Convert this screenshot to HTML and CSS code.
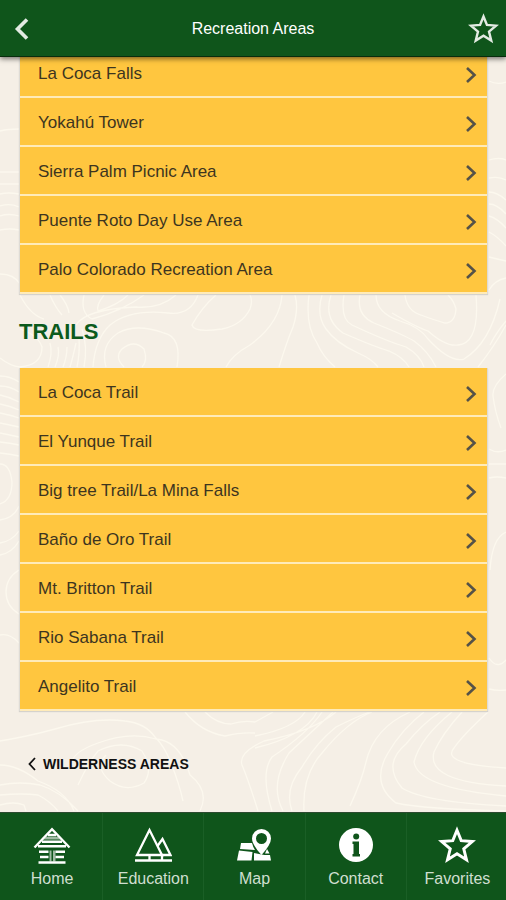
FILE: index.html
```
<!DOCTYPE html>
<html lang="en">
<head>
<meta charset="utf-8">
<meta name="viewport" content="width=device-width, initial-scale=1">
<title>Recreation Areas</title>
<link rel="stylesheet" href="styles.css">
</head>
<body>
<svg class="sprite" aria-hidden="true">
  <symbol id="chevron" viewBox="0 0 12 18"><path d="M2 2l7.500 7-7.500 7" fill="none" stroke="currentColor" stroke-width="2.600"/></symbol>
  <symbol id="star" viewBox="0 0 36 36"><path d="M18 4l4 9.900 10.500.8-8.100 6.900 2.600 10.400-9-5.700-9 5.700 2.600-10.400-8.100-6.900 10.500-.8z" fill="none" stroke="currentColor" stroke-width="2.800"/></symbol>
</svg>

<header class="topbar">
  <button class="icon-button" aria-label="Back">
    <svg class="back-icon" viewBox="0 0 16 24"><path d="M13 2.500L3.500 12l9.500 9.500" fill="none" stroke="currentColor" stroke-width="3.600"/></svg>
  </button>
  <h1 class="title">Recreation Areas</h1>
  <button class="icon-button icon-button-end" aria-label="Add to favorites">
    <svg class="fav-icon"><use href="#star"/></svg>
  </button>
</header>

<main class="content">
  <svg class="contours" viewBox="0 57 506 755" preserveAspectRatio="xMidYMid slice" aria-hidden="true">
    <path d="M0 131Q8 129 19 129M0 172h19M0 184h19M0 194q8-2 19 0M0 206q10-3 19 1M0 216q9-3 19 0M0 230q10-2 19 0M0 274q14 0 20 10"/>
    <path d="M20 295q10 20 24 24M50 295q5 12 12 20M60 295q8 10 9 18M0 358q10 8 20 9 22-2 22-20-4-12-22-18"/>
    <path d="M0 376q10 0 19 6M0 386q10 0 19 6M0 395q10 2 19 7M0 404q10 2 19 6M0 413q10 2 19 5M0 423q10 2 19 4M0 433q10 2 19 4M0 442q10 1 19 3M0 453q10 1 19 3M0 464q10 0 12 18 0 18-12 22M0 520q14-2 19-14M0 543q12-2 19-12M0 555q12-2 19-14M19 570Q6 578 6 592t13 22M0 635q10-2 19 8"/>
    <path d="M48 367q5-14 2-24M55 367q5-12 3-20M63 367q4-10 4-20M70 367q3-10 6-24M77 367q3-14 2-30M84 367q4-20-2-38M93 367q2-28 17-42 20-16 58-12 22 3 30-18M106 367q-6-22 12-34 18-10 46 0 18 4 13 34M124 367q-10-10-2-18 12-10 22 0 4 12-2 18M84 295q-4 18 8 24 30-8 52-24M104 295q-8 10-6 16 20-6 30-16M76 325q10-16 60-18 24 2 40-12"/>
    <path d="M216 295q-14 12-24 30 2 8 30 4 20-4 28-20 3-8 0-14M226 367q6-12 24-22 30-22 32-50M279 367q8-26 14-40 6-18 2-32M309 295q-4 30 8 48 6 14 18 24M322 295q-6 20 4 34 10 14 32 24 14 6 20 14M331 295q-8 24 12 38 32 14 46 18 14 6 20 16M344 295q-4 24 8 30 34 16 54 22 14 8 18 20M360 295q-4 20 14 28 30 12 40 18 14 10 22 26M376 295q0 18 24 26 20 6 28 18 22 24 36 20 26-16 36-60M392 313q24 14 36 18 18 16 30 14 22-2 18-50M405 295q2 16 16 20 10 4 24 8 10 0 11-14-2-8-8-14M478 367q16-20 28-42M490 345q6-12 16-24"/>
    <path d="M489 81q8 4 17 1M489 160q10-3 17 0M489 178q10-2 17 2M489 192q8 0 17 8M489 204q8 0 17 10M489 216q8 2 17 12M489 232q8 4 17 14M489 257q8 2 17 4M489 290q6-10 17-12M506 374q-14 12-13 22 2 16 8 32M489 449q8 5 17 1M489 464h17M489 478q8-2 17 0M490 570q2-32 16-38M489 658q8 12 17 2M489 689q8 2 17 1"/>
    <path d="M0 741q30-5 55-12 40-12 70-8 20 2 30 16 10 10 16 26 8 20 12 38M200 811q10-20-10-36-10-34-34-36-26-8-58 4-28 10-26 22M78 785q10-22 20-34 24-12 44 0 12 18 2 32-18 10-34-2-16-14-4-26M0 785q20-4 40 0 20 6 38 26M0 795q22-2 38 0 12 6 20 16M0 805q14-4 24 0l2 6M0 765q18 0 38 16 28 10 36 30"/>
    <path d="M185 712q16 20 40 24 16-4 30-3M205 712q12 12 26 12 12-4 24-2M255 722l18-10M255 736q40-8 50-24M255 748q50-12 62-36M258 811q-10-32-16-46-4-12 22-24 50-10 72-29M272 811q-12-38 0-54 36-24 50-45M283 811q-14-26 6-58l44-41M292 811q-8-22 10-44 14-24 34-40 20-10 36-16M304 811q-2-36 18-58 26-32 50-41M350 806q12-26 16-44 8-34 44-50M506 811q-82-2-110-8-26-20-8-50 14-24 36-41M506 806q-82-4-104-18-20-24 4-44 16-20 34-32M506 796q-88-8-92-34 6-24 38-50M506 786q-80-4-72-34 8-18 28-40M506 768q-66-4-52-20 8-12 34-36"/>
  </svg>

  <ul class="list list-areas">
    <li><a class="row" href="#la-coca-falls">La Coca Falls<svg class="chevron"><use href="#chevron"/></svg></a></li>
    <li><a class="row" href="#yokahu-tower">Yokahú Tower<svg class="chevron"><use href="#chevron"/></svg></a></li>
    <li><a class="row" href="#sierra-palm">Sierra Palm Picnic Area<svg class="chevron"><use href="#chevron"/></svg></a></li>
    <li><a class="row" href="#puente-roto">Puente Roto Day Use Area<svg class="chevron"><use href="#chevron"/></svg></a></li>
    <li><a class="row" href="#palo-colorado">Palo Colorado Recreation Area<svg class="chevron"><use href="#chevron"/></svg></a></li>
  </ul>

  <h2 class="heading">TRAILS</h2>

  <ul class="list">
    <li><a class="row" href="#la-coca-trail">La Coca Trail<svg class="chevron"><use href="#chevron"/></svg></a></li>
    <li><a class="row" href="#el-yunque">El Yunque Trail<svg class="chevron"><use href="#chevron"/></svg></a></li>
    <li><a class="row" href="#big-tree">Big tree Trail/La Mina Falls<svg class="chevron"><use href="#chevron"/></svg></a></li>
    <li><a class="row" href="#bano-de-oro">Baño de Oro Trail<svg class="chevron"><use href="#chevron"/></svg></a></li>
    <li><a class="row" href="#mt-britton">Mt. Britton Trail<svg class="chevron"><use href="#chevron"/></svg></a></li>
    <li><a class="row" href="#rio-sabana">Rio Sabana Trail<svg class="chevron"><use href="#chevron"/></svg></a></li>
    <li><a class="row" href="#angelito">Angelito Trail<svg class="chevron"><use href="#chevron"/></svg></a></li>
  </ul>

  <a class="previous" href="#wilderness">
    <svg class="previous-icon" viewBox="0 0 8 14"><path d="M7 1L1.500 7 7 13" fill="none" stroke="currentColor" stroke-width="1.800"/></svg>
    WILDERNESS AREAS
  </a>
</main>

<nav class="tabs" aria-label="Main">
  <a class="tab" href="#home">
    <svg class="tab-icon" viewBox="0 0 38 38">
      <g fill="none" stroke="currentColor" stroke-width="2.400">
        <path d="M1.500 21.500L19 3.200l17.500 18.300"/>
        <path d="M15 9h8M9 15.800h20M5 20.300h28M6 25.800h9.500M22.500 25.800H32M7 31h8.500M22.500 31H31M5.500 36.500h27"/>
      </g>
      <path d="M16.500 24.500h2v11h-2zM20 24.500h2.500v11H20z" fill="currentColor" opacity=".6"/>
      <path d="M13 10.800h12l2.500 2.800h-17z" fill="currentColor" opacity=".6"/>
    </svg>
    Home
  </a>
  <a class="tab" href="#education">
    <svg class="tab-icon" viewBox="0 0 38 38">
      <g fill="none" stroke="currentColor" stroke-width="2.300">
        <path d="M15.500 4L3 29h25z"/>
        <path d="M23.500 20L28.500 13l8 16H28M1 34.500h37M15.500 29v5M28 29v5"/>
      </g>
    </svg>
    Education
  </a>
  <a class="tab" href="#map">
    <svg class="tab-icon" viewBox="0 0 38 38">
      <g fill="currentColor">
        <path d="M6 17h11q1 4 3 7L5 23zM4 24.500l13.500 1.500-1 8.500H2zM19 27l5 1 5.500 1h5.500l1 5.500H19z"/>
        <path d="M32 23l2.500 4.500H30z"/>
        <path fill-rule="evenodd" d="M26.500 3a9.500 9.500 0 0 1 9.500 9.500q0 6-9.500 16.500Q17 18.500 17 12.500A9.500 9.500 0 0 1 26.500 3zm0 4a5.500 5.500 0 1 0 0 11 5.500 5.500 0 0 0 0-11z"/>
      </g>
    </svg>
    Map
  </a>
  <a class="tab" href="#contact">
    <svg class="tab-icon" viewBox="0 0 38 38">
      <circle cx="19" cy="19" r="17" fill="currentColor"/>
      <path class="cutout" d="M15.500 15.500H22V28h1v2.500h-7.500V28h1V18h-1z"/>
      <circle class="cutout" cx="19.200" cy="10.500" r="3"/>
    </svg>
    Contact
  </a>
  <a class="tab" href="#favorites">
    <svg class="tab-icon"><use href="#star"/></svg>
    Favorites
  </a>
</nav>
</body>
</html>
```
FILE: styles.css
```
:root {
  --green: #0f551b;
  --amber: #ffc63f;
  --sand: #f5efe6;
}

* {
  box-sizing: border-box;
}

body {
  margin: 0;
  height: 100vh;
  display: flex;
  flex-direction: column;
  overflow: hidden;
  background: var(--sand);
  font-family: "Liberation Sans", Arial, sans-serif;
  color: #1d1d1b;
}

a {
  color: inherit;
  text-decoration: none;
}

svg {
  display: block;
  flex: none;
}

.sprite {
  position: absolute;
  width: 0;
  height: 0;
}

.topbar {
  position: relative;
  z-index: 1;
  flex: none;
  display: grid;
  grid-template-columns: 44px 1fr 44px;
  align-items: center;
  height: 57px;
  background: var(--green);
  border-bottom: 1px solid #072c0d;
  box-shadow: 0 2px 5px rgba(0, 0, 0, 0.5);
  color: #fff;
}

.icon-button {
  display: flex;
  align-items: center;
  height: 56px;
  padding: 2px 0 0 14px;
  border: 0;
  background: none;
  color: #e3ebe3;
}

.icon-button-end {
  padding: 0 0 0 6px;
}

.back-icon {
  width: 16px;
  height: 24px;
}

.fav-icon {
  width: 31px;
  height: 31px;
}

.title {
  margin: 0;
  padding-top: 2px;
  font-size: 16px;
  font-weight: 400;
  text-align: center;
}

.content {
  position: relative;
  flex: 1;
  min-height: 0;
  overflow: hidden;
  padding: 0 18px 0 19px;
}

.contours {
  position: absolute;
  inset: 0;
  width: 100%;
  height: 100%;
  fill: none;
  stroke: #fcf8ee;
  stroke-width: 1.3;
}

.list {
  position: relative;
  margin: 0;
  padding: 0;
  list-style: none;
  border: solid #dedbd5;
  border-width: 0 1px;
  box-shadow: 0 1px 1px #d5d2cc;
}

/* The first list is scrolled partly beneath the top bar. */
.list-areas {
  margin-top: -8px;
}

.row {
  display: flex;
  align-items: center;
  justify-content: space-between;
  height: 49px;
  padding: 2px 10px 0 18px;
  background: var(--amber);
  border-bottom: 2px solid #ffebb9;
  font-size: 17px;
  color: #3d351f;
}

.chevron {
  width: 12px;
  height: 18px;
  margin-top: 2px;
  color: #555248;
}

.heading {
  position: relative;
  margin: 0;
  padding: 25px 0 23px;
  font-size: 22px;
  line-height: 26px;
  color: #0b5a1c;
}

.previous {
  position: relative;
  display: inline-flex;
  align-items: center;
  gap: 7px;
  margin: 42px 0 0 9px;
  font-size: 14px;
  line-height: 22px;
  font-weight: 700;
  color: #111;
}

.previous-icon {
  width: 8px;
  height: 14px;
}

.tabs {
  flex: none;
  display: grid;
  grid-template-columns: repeat(5, 1fr);
  height: 88px;
  margin-right: -2px;
  padding-left: 2px;
  background: var(--green);
  border-top: 1px solid #2c4a30;
}

.tab {
  display: flex;
  flex-direction: column;
  align-items: center;
  gap: 5px;
  padding-top: 13px;
  border-right: 1px solid #1a5f26;
  font-size: 16px;
  line-height: 20px;
  color: #cfdfd0;
}

.tab:last-child {
  border-right: 0;
}

.tab-icon {
  width: 38px;
  height: 38px;
  color: #fff;
}

.cutout {
  fill: var(--green);
}
```
